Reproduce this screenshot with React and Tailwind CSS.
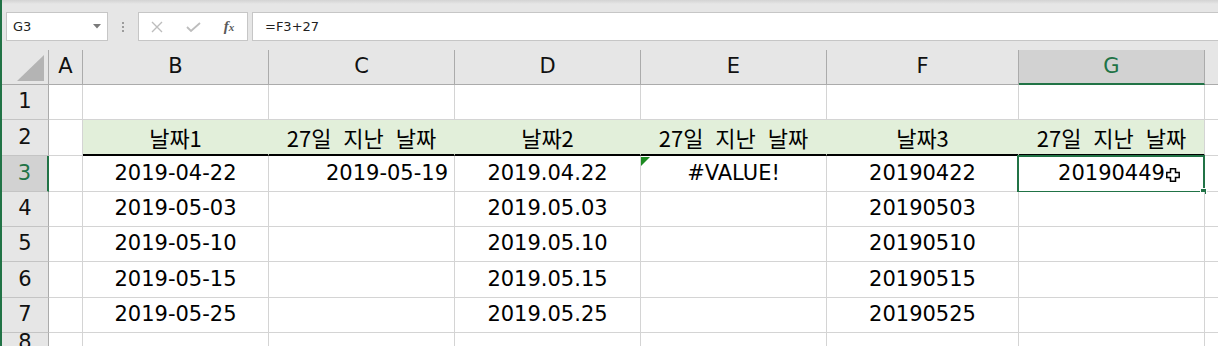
import React from "react";

const COLS = [
  { key: "A", w: "w-[34px]" },
  { key: "B", w: "w-[186px]" },
  { key: "C", w: "w-[186px]" },
  { key: "D", w: "w-[186px]" },
  { key: "E", w: "w-[186px]" },
  { key: "F", w: "w-[192px]" },
  { key: "G", w: "w-[186px]" },
];

const ROW_H = {
  1: "h-[35px]",
  2: "h-[36px]",
  3: "h-[36px]",
  4: "h-[35px]",
  5: "h-[35px]",
  6: "h-[36px]",
  7: "h-[35px]",
  8: "h-[20px]",
};

const HDR = "27일 지난 날짜";

const DATA = {
  2: { B: "날짜1", C: HDR, D: "날짜2", E: HDR, F: "날짜3", G: HDR },
  3: { B: "2019-04-22", C: "2019-05-19", D: "2019.04.22", E: "#VALUE!", F: "20190422", G: "20190449" },
  4: { B: "2019-05-03", D: "2019.05.03", F: "20190503" },
  5: { B: "2019-05-10", D: "2019.05.10", F: "20190510" },
  6: { B: "2019-05-15", D: "2019.05.15", F: "20190515" },
  7: { B: "2019-05-25", D: "2019.05.25", F: "20190525" },
  1: {},
  8: {},
};

function Toolbar() {
  return (
    <div className="h-[50px] bg-[#e6e6e6] flex flex-col">
      <div className="h-[4px] bg-gradient-to-b from-[#d3d3d3] to-[#e6e6e6]" />
      <div className="mt-[8px] h-[29px] flex items-stretch">
        <div className="ml-[4px] w-[102px] border border-[#c6c6c6] bg-white flex items-center justify-between pl-[6px] pr-[6px]">
          <span className="text-[13px] text-[#222] leading-none">G3</span>
          <svg width="8" height="5" viewBox="0 0 8 5">
            <polygon points="0,0 8,0 4,4.5" fill="#7a7a7a" />
          </svg>
        </div>
        <div className="w-[30px] flex flex-col items-center justify-center gap-[2px]">
          <div className="w-[2px] h-[2px] bg-[#9c9c9c]" />
          <div className="w-[2px] h-[2px] bg-[#9c9c9c]" />
          <div className="w-[2px] h-[2px] bg-[#9c9c9c]" />
        </div>
        <div className="w-[110px] border border-[#c6c6c6] bg-white flex items-center">
          <div className="w-[36px] flex items-center justify-center">
            <svg width="12" height="12" viewBox="0 0 12 12">
              <path d="M1 1 L11 11 M11 1 L1 11" stroke="#bdbdbd" strokeWidth="1.4" fill="none" />
            </svg>
          </div>
          <div className="w-[36px] flex items-center justify-center">
            <svg width="15" height="10" viewBox="0 0 15 10">
              <path d="M1 5 L5 9 L14 1" stroke="#bdbdbd" strokeWidth="1.8" fill="none" />
            </svg>
          </div>
          <div className="w-[36px] flex items-center justify-center">
            <span className="font-['Liberation_Serif',serif] italic font-bold text-[15px] text-[#5a5a5a] leading-none">
              f<span className="text-[11px]">x</span>
            </span>
          </div>
        </div>
        <div className="ml-[4px] flex-1 border-y border-l border-[#c6c6c6] bg-white flex items-center pl-[12px]">
          <span className="text-[13px] text-[#222] leading-none">=F3+27</span>
        </div>
      </div>
    </div>
  );
}

function HeaderRow() {
  return (
    <div className="flex h-[35px] bg-[#e6e6e6]">
      <div className="w-[47px] h-full border-r border-b border-[#ababab] flex items-end justify-end pr-[3px] pb-[3px]">
        <svg width="28" height="26" viewBox="0 0 28 26">
          <polygon points="27,0 27,26 0,26" fill="#b4b4b4" />
        </svg>
      </div>
      {COLS.map((c) =>
        c.key === "G" ? (
          <div
            key={c.key}
            className={`${c.w} h-full border-r border-r-[#ababab] border-b-2 border-b-[#217346] bg-[#d2d2d2] flex items-center justify-center text-[21px] text-[#217346]`}
          >
            {c.key}
          </div>
        ) : (
          <div
            key={c.key}
            className={`${c.w} h-full border-r border-b border-[#ababab] flex items-center justify-center text-[21px] text-[#111]`}
          >
            {c.key}
          </div>
        )
      )}
      <div className="flex-1 h-full border-b border-[#ababab]" />
    </div>
  );
}

function Cell({ row, col, value }) {
  const isHead = row === 2 && col.key !== "A";
  const isSel = row === 3 && col.key === "G";
  const align =
    row === 3 && col.key === "C" ? "justify-end pr-[6px]" : "justify-center";

  if (isHead) {
    return (
      <div
        className={`${col.w} h-full bg-[#e2efda] border-b-2 border-b-black ${
          col.key === "G" ? "border-r border-r-[#d4d4d4]" : "border-r border-r-[#e2efda]"
        } flex items-center justify-center font-['Noto_Sans_CJK_KR',sans-serif] text-[22px] [word-spacing:7px] text-black whitespace-nowrap`}
      >
        {value}
      </div>
    );
  }

  return (
    <div
      className={`${col.w} h-full relative bg-white border-r border-b border-[#d4d4d4] flex items-center ${align} text-[21px] text-black whitespace-nowrap`}
    >
      {value}
      {row === 3 && col.key === "E" && (
        <svg className="absolute left-0 top-[1px]" width="9" height="9" viewBox="0 0 9 9">
          <polygon points="0,0 9,0 0,9" fill="#1d8a22" />
        </svg>
      )}
      {isSel && (
        <>
          <div className="absolute -left-[2px] -top-[1px] w-[188px] h-[38px] border-2 border-[#217346]">
            <div className="absolute -right-[4px] -bottom-[4px] w-[7px] h-[7px] bg-[#217346] border border-white" />
          </div>
          <svg
            className="absolute left-[147px] top-[12px]"
            width="14"
            height="14"
            viewBox="0 0 14 14"
          >
            <polygon
              points="4.5,0.8 9.5,0.8 9.5,4.5 13.2,4.5 13.2,9.5 9.5,9.5 9.5,13.2 4.5,13.2 4.5,9.5 0.8,9.5 0.8,4.5 4.5,4.5"
              fill="white"
              stroke="black"
              strokeWidth="1.5"
            />
          </svg>
        </>
      )}
    </div>
  );
}

function DataRow({ row }) {
  const sel = row === 3;
  const data = DATA[row] || {};
  return (
    <div className={`flex ${ROW_H[row]}`}>
      {sel ? (
        <div className="w-[47px] h-full bg-[#d2d2d2] border-r-2 border-r-[#217346] border-b border-b-[#c4c4c4] flex items-center justify-center text-[21px] text-[#217346]">
          {row}
        </div>
      ) : (
        <div className="w-[47px] h-full bg-[#e6e6e6] border-r border-r-[#ababab] border-b border-b-[#c4c4c4] flex items-center justify-center text-[21px] text-[#111]">
          {row}
        </div>
      )}
      {COLS.map((c) => (
        <Cell key={c.key} row={row} col={c} value={data[c.key]} />
      ))}
      <div className="flex-1 h-full bg-white border-b border-[#d4d4d4]" />
    </div>
  );
}

export default function App() {
  return (
    <div className="w-[1218px] h-[346px] overflow-hidden bg-white border-l-2 border-[#217346] font-['DejaVu_Sans','Noto_Sans_CJK_KR',sans-serif]">
      <Toolbar />
      <HeaderRow />
      {[1, 2, 3, 4, 5, 6, 7, 8].map((r) => (
        <DataRow key={r} row={r} />
      ))}
    </div>
  );
}
